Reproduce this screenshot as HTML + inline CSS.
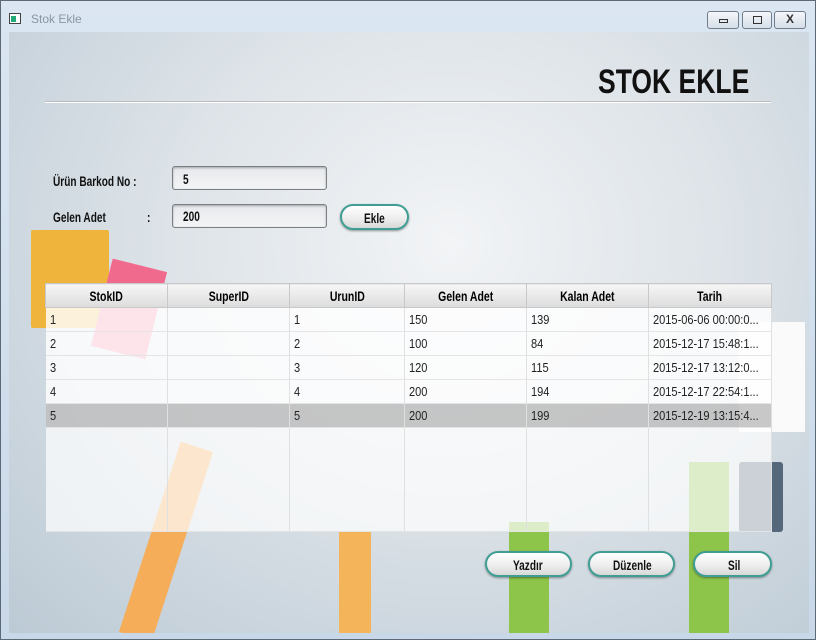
<!DOCTYPE html>
<html><head><style>
*{margin:0;padding:0;box-sizing:border-box}
body{width:816px;height:640px;overflow:hidden;background:#cfd9e3;font-family:"Liberation Sans",sans-serif;position:relative}
.win{position:absolute;left:0;top:0;width:816px;height:640px;border:1px solid #5c6a78;background:linear-gradient(#dbe6f2,#c9d8e8);}
.title{position:absolute;left:30px;top:11px;font-size:12px;color:#8a96a3}
.ic{position:absolute;left:8px;top:12px;width:12px;height:11px;border:1px solid #444;background:#fff}
.ic:after{content:"";position:absolute;left:1px;top:2px;width:5px;height:6px;background:#2a7}
.wb{position:absolute;top:10px;height:18px;border:1px solid #6f7d8c;border-radius:3px;background:linear-gradient(#f4f7fb,#d6dee8)}
.content{position:absolute;left:8px;top:31px;width:800px;height:601px;overflow:hidden;background:radial-gradient(ellipse at 55% 35%,#f2f4f6 0%,#dde3e8 45%,#bccad5 100%)}
.n{position:absolute;font-weight:bold;display:inline-block;transform-origin:left top;transform:scaleX(.72);white-space:nowrap;color:#111}
.inp{position:absolute;height:24px;border:1px solid #7b7f83;border-radius:3px;background:linear-gradient(#e6e9ec,#f3f4f5);box-shadow:inset 0 1px 2px rgba(0,0,0,.3)}
.btn{position:absolute;height:26px;border:2px solid #3f9d93;border-radius:13px;background:linear-gradient(#fff,#ececec 60%,#d8d8d8);box-shadow:0 1px 2px rgba(0,0,0,.4);text-align:center}
table{position:absolute;left:36px;top:251px;width:726px;border-collapse:collapse;table-layout:fixed}
th{height:24px;background:linear-gradient(#f6f6f6,#dcdcdc);border:1px solid #c8c8c8;font-size:14px}
td{height:24px;border-right:1px solid #e0e0e0;border-bottom:1px solid #e4e4e4;font-size:13px;color:#222;padding-left:4px;background:rgba(255,255,255,.82);white-space:nowrap;overflow:hidden}
tr.sel td{background:rgba(190,190,190,.85)}
.cell{display:inline-block;transform:scaleX(.85);transform-origin:left center}
.thc{display:inline-block;transform:scaleX(.75);font-weight:bold}
</style></head><body>
<div class="win">
<div class="ic"></div><div class="title">Stok Ekle</div>
<div class="wb" style="left:706px;width:32px"><div style="position:absolute;left:11px;top:7px;width:9px;height:4px;border:1px solid #333"></div></div>
<div class="wb" style="left:741px;width:30px"><div style="position:absolute;left:10px;top:4px;width:9px;height:8px;border:1px solid #333"></div></div>
<div class="wb" style="left:773px;width:32px;text-align:center;font-size:12px;font-weight:bold;color:#333">X</div>
<div class="content">
 <div style="position:absolute;left:22px;top:198px;width:78px;height:98px;background:#efb43c;border-radius:2px"></div>
 <div style="position:absolute;left:92px;top:232px;width:56px;height:90px;background:#f06a8e;transform:rotate(14deg)"></div>
 <div style="position:absolute;left:140px;top:410px;width:34px;height:200px;background:#f5ad5a;transform:rotate(18deg)"></div>
 <div style="position:absolute;left:330px;top:500px;width:32px;height:101px;background:#f4b45a"></div>
 <div style="position:absolute;left:500px;top:490px;width:40px;height:111px;background:#8dc44a"></div>
 <div style="position:absolute;left:680px;top:430px;width:40px;height:171px;background:#8dc44a"></div>
 <div style="position:absolute;left:730px;top:290px;width:66px;height:110px;background:#fafafa"></div>
 <div style="position:absolute;left:730px;top:430px;width:44px;height:70px;background:#55677a;border-radius:3px"></div>
 <div style="position:absolute;left:36px;top:69px;width:726px;height:1px;background:#bbb;box-shadow:0 1px 0 #fff"></div>
 <div class="n" style="left:589px;top:31px;font-size:34px;transform:scaleX(.78)">STOK EKLE</div>
 <div class="n" style="left:44px;top:141px;font-size:14px">Ürün Barkod No :</div>
 <div class="n" style="left:44px;top:177px;font-size:14px">Gelen Adet</div>
 <div class="n" style="left:138px;top:177px;font-size:14px">:</div>
 <div class="inp" style="left:163px;top:134px;width:155px"><span class="n" style="left:10px;top:4px;font-size:14px">5</span></div>
 <div class="inp" style="left:163px;top:172px;width:155px"><span class="n" style="left:10px;top:3px;font-size:14px">200</span></div>
 <div class="btn" style="left:331px;top:172px;width:69px"><span class="n" style="left:22px;top:4px;font-size:14px">Ekle</span></div>
 <table>
 <colgroup><col style="width:122px"><col style="width:122px"><col style="width:115px"><col style="width:122px"><col style="width:122px"><col style="width:123px"></colgroup>
 <tr><th><span class="thc">StokID</span></th><th><span class="thc">SuperID</span></th><th><span class="thc">UrunID</span></th><th><span class="thc">Gelen Adet</span></th><th><span class="thc">Kalan Adet</span></th><th><span class="thc">Tarih</span></th></tr>
 <tr><td><span class="cell">1</span></td><td></td><td><span class="cell">1</span></td><td><span class="cell">150</span></td><td><span class="cell">139</span></td><td><span class="cell">2015-06-06 00:00:0...</span></td></tr>
 <tr><td><span class="cell">2</span></td><td></td><td><span class="cell">2</span></td><td><span class="cell">100</span></td><td><span class="cell">84</span></td><td><span class="cell">2015-12-17 15:48:1...</span></td></tr>
 <tr><td><span class="cell">3</span></td><td></td><td><span class="cell">3</span></td><td><span class="cell">120</span></td><td><span class="cell">115</span></td><td><span class="cell">2015-12-17 13:12:0...</span></td></tr>
 <tr><td><span class="cell">4</span></td><td></td><td><span class="cell">4</span></td><td><span class="cell">200</span></td><td><span class="cell">194</span></td><td><span class="cell">2015-12-17 22:54:1...</span></td></tr>
 <tr class="sel"><td><span class="cell">5</span></td><td></td><td><span class="cell">5</span></td><td><span class="cell">200</span></td><td><span class="cell">199</span></td><td><span class="cell">2015-12-19 13:15:4...</span></td></tr>
 <tr><td style="height:104px;background:rgba(255,255,255,.7)"></td><td style="background:rgba(255,255,255,.7)"></td><td style="background:rgba(255,255,255,.7)"></td><td style="background:rgba(255,255,255,.7)"></td><td style="background:rgba(255,255,255,.7)"></td><td style="background:rgba(255,255,255,.7)"></td></tr>
 </table>
 <div class="btn" style="left:476px;top:519px;width:87px"><span class="n" style="left:26px;top:4px;font-size:14px">Yazdır</span></div>
 <div class="btn" style="left:579px;top:519px;width:87px"><span class="n" style="left:23px;top:4px;font-size:14px">Düzenle</span></div>
 <div class="btn" style="left:684px;top:519px;width:79px"><span class="n" style="left:33px;top:4px;font-size:14px">Sil</span></div>
</div>
</div>
</body></html>
